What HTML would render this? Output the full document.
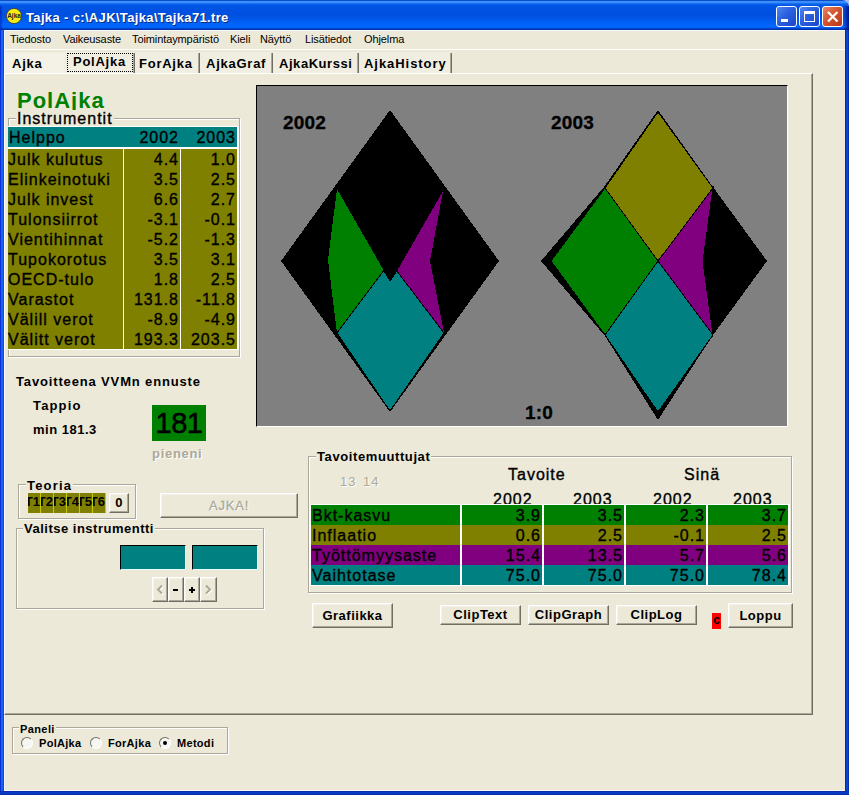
<!DOCTYPE html>
<html>
<head>
<meta charset="utf-8">
<title>Tajka</title>
<style>
html,body{margin:0;padding:0;}
body{width:849px;height:795px;overflow:hidden;background:#ece9d8;font-family:"Liberation Sans",sans-serif;position:relative;color:#000;}
.abs{position:absolute;}
div,span{box-sizing:border-box;}
#titlebar{position:absolute;left:0;top:0;width:849px;height:30px;
 background:linear-gradient(to bottom,#0a50c8 0px,#0a50c8 1px,#3c8eff 1.3px,#3a8cff 2.6px,#146ef0 3.6px,#0058e6 5px,#0052e2 9px,#0050e0 15px,#0058ea 19px,#0064fc 24px,#0066ff 27px,#0056e8 28px,#0038b4 29px,#002ea0 30px);}
#title{position:absolute;left:26px;top:10px;color:#fff;font-weight:bold;font-size:13px;letter-spacing:0.35px;text-shadow:1px 1px 0 #0a2a7a;white-space:nowrap;}
.bl{position:absolute;background:#0040d0;}
.wb{position:absolute;top:6px;width:21px;height:21px;border:1px solid #fff;border-radius:3px;
 background:linear-gradient(135deg,#4f86ee 0%,#2a5fe0 45%,#1a47c8 100%);}
#close{background:linear-gradient(135deg,#e8896b 0%,#d5532c 45%,#b8381a 100%);}
.menu{position:absolute;top:33px;font-size:11px;white-space:nowrap;letter-spacing:-0.1px}
.tab{position:absolute;top:56px;font-size:13px;font-weight:bold;white-space:nowrap;letter-spacing:0.75px;}
.t16{font-size:16px;letter-spacing:1px;white-space:nowrap;-webkit-text-stroke:0.35px #000;}
.row{position:absolute;left:8px;width:229px;height:20px;}
.c0{position:absolute;left:0px;top:2px;}
.c1{position:absolute;right:58px;top:2px;}
.c2{position:absolute;right:1px;top:2px;}
.b13{font-size:13px;font-weight:bold;white-space:nowrap;letter-spacing:0.3px;}
.btn{position:absolute;border:1px solid;border-color:#fff #716f64 #716f64 #fff;box-shadow:inset -1px -1px 0 #aca899, inset 1px 1px 0 #f4f2e8;background:#ece9d8;text-align:center;font-weight:bold;font-size:13px;letter-spacing:0.5px;}
.gb{position:absolute;border:1px solid #aca899;box-shadow:1px 1px 0 #fff, inset 1px 1px 0 #fff;}
.gbl{position:absolute;background:#ece9d8;white-space:nowrap;}

.tr{position:absolute;left:0;width:477px;height:20px;font-size:16px;letter-spacing:1px;white-space:nowrap;-webkit-text-stroke:0.35px #000;}
.tr .l{position:absolute;left:1px;top:2px;}
.tr .v{position:absolute;top:2px;}
.radio{position:absolute;width:12px;height:12px;border-radius:6px;background:#f6f6f2;border:1px solid;border-color:#716f64 #fff #fff #716f64;}
.rl{font-size:11px;font-weight:bold;white-space:nowrap;letter-spacing:0.3px}
.tb{position:absolute;top:0;width:12px;height:20px;background:#808000;overflow:hidden;font-size:13px;font-weight:bold;}
.tb span{position:absolute;right:0px;top:1px;white-space:nowrap;letter-spacing:0}
</style>
</head>
<body>
<!-- window frame -->
<div class="abs" style="left:841px;top:0;width:8px;height:8px;background:#a6baee"></div>
<div id="titlebar" style="border-radius:0 7px 0 0"></div>
<div class="bl" style="left:0;top:30px;width:4px;height:765px;background:linear-gradient(to right,#0a30d8 0px,#0a30d8 1px,#1a62f0 1px,#1a64f0 3px,#0a4cd8 3px,#0a4cd8 4px)"></div>
<div class="bl" style="left:845px;top:30px;width:4px;height:765px;background:linear-gradient(to right,#0a2c98 0px,#0a2c98 1px,#0a42c8 1px,#0a46d0 3px,#0830b4 3px,#0830b4 4px)"></div>
<div class="bl" style="left:0;top:791px;width:849px;height:4px;background:linear-gradient(to bottom,#0a2ea8 0px,#0a2ea8 1px,#0a3cc4 1px,#0a38c0 3px,#082cac 3px,#082cac 4px)"></div>
<div class="abs" style="left:4px;top:31px;width:1px;height:760px;background:#f4f6fc"></div>
<div class="abs" style="left:4px;top:790px;width:841px;height:1px;background:#f4f6fc"></div>

<div class="abs" style="left:843px;top:6px;width:6px;height:24px;background:linear-gradient(to right,rgba(0,10,140,0),rgba(0,10,130,0.55) 60%,rgba(0,0,110,0.75))"></div>
<div class="abs" style="left:0;top:6px;width:3px;height:24px;background:linear-gradient(to left,rgba(0,10,140,0),rgba(0,10,160,0.5))"></div>
<!-- title icon -->
<svg class="abs" style="left:6px;top:8px" width="16" height="16" viewBox="0 0 16 16"><circle cx="8" cy="8" r="7.6" fill="#f6ec12" stroke="#3a3a30" stroke-width="0.8"/><text x="8" y="10.3" font-family="Liberation Sans" font-size="6.5" font-weight="bold" text-anchor="middle" fill="#222">Ajka</text></svg>
<div id="title">Tajka - c:\AJK\Tajka\Tajka71.tre</div>
<div class="wb" style="left:776px"><div class="abs" style="left:4px;top:12px;width:7px;height:3px;background:#fff"></div></div>
<div class="wb" style="left:799px"><div class="abs" style="left:4px;top:4px;width:11px;height:11px;border:1px solid #fff;border-top-width:3px"></div></div>
<div class="wb" id="close" style="left:822px"><svg class="abs" style="left:0;top:0" width="19" height="19"><path d="M5 5 L14.5 14.5 M14.5 5 L5 14.5" stroke="#fff" stroke-width="2.2" stroke-linecap="butt"/></svg></div>

<!-- menu -->
<div class="menu" style="left:10px">Tiedosto</div>
<div class="menu" style="left:63px">Vaikeusaste</div>
<div class="menu" style="left:132px">Toimintaympäristö</div>
<div class="menu" style="left:230px">Kieli</div>
<div class="menu" style="left:260px">Näyttö</div>
<div class="menu" style="left:305px">Lisätiedot</div>
<div class="menu" style="left:364px">Ohjelma</div>
<div class="abs" style="left:4px;top:30px;width:841px;height:1px;background:#f8f8fc"></div>
<div class="abs" style="left:4px;top:49px;width:841px;height:1px;background:#fff"></div>

<!-- tabs -->
<div class="abs" style="left:5px;top:52px;width:446px;height:21px;background:#f0eee1"></div>
<div class="abs" style="left:5px;top:53px;width:59px;height:20px;background:#f4f2e6"></div>
<div class="tab" style="left:12px">Ajka</div>
<div class="abs" style="left:67px;top:53px;width:66px;height:19px;border:1px dotted #000"></div>
<div class="tab" style="left:73px;top:54px">PolAjka</div>
<div class="tab" style="left:139px">ForAjka</div>
<div class="tab" style="left:206px">AjkaGraf</div>
<div class="tab" style="left:279px;letter-spacing:0.55px">AjkaKurssi</div>
<div class="tab" style="left:364px;letter-spacing:0.95px">AjkaHistory</div>

<div class="abs" style="left:133px;top:53px;width:1px;height:20px;background:#aca899"></div><div class="abs" style="left:134px;top:53px;width:1px;height:20px;background:#716f64"></div><div class="abs" style="left:198px;top:53px;width:1px;height:20px;background:#aca899"></div><div class="abs" style="left:199px;top:53px;width:1px;height:20px;background:#716f64"></div><div class="abs" style="left:271px;top:53px;width:1px;height:20px;background:#aca899"></div><div class="abs" style="left:272px;top:53px;width:1px;height:20px;background:#716f64"></div><div class="abs" style="left:357px;top:53px;width:1px;height:20px;background:#aca899"></div><div class="abs" style="left:358px;top:53px;width:1px;height:20px;background:#716f64"></div><div class="abs" style="left:450px;top:53px;width:1px;height:20px;background:#aca899"></div><div class="abs" style="left:451px;top:53px;width:1px;height:20px;background:#716f64"></div>
<!-- main panel -->
<div class="abs" id="panel" style="left:4px;top:73px;width:809px;height:642px;border-top:1px solid #fff;border-left:1px solid #fff;border-right:1px solid #716f64;border-bottom:1px solid #716f64;box-shadow:inset -1px -1px 0 #aca899"></div>

<!-- PolAjka heading -->
<div class="abs" style="left:17px;top:88px;font-size:22px;font-weight:bold;color:#008000;letter-spacing:1px;white-space:nowrap">PolAjka</div>

<!-- Instrumentit groupbox -->
<div class="gb" style="left:8px;top:118px;width:232px;height:239px"></div>
<div class="gbl t16" style="left:16px;top:110px;padding:0 1px">Instrumentit</div>
<div class="abs" style="left:8px;top:126px;width:231px;height:224px;background:#fff"></div>
<div class="abs" style="left:8px;top:127px;width:229px;height:20px;background:#008080"></div>
<div class="abs" style="left:8px;top:149px;width:229px;height:200px;background:#808000"></div>
<div class="abs" style="left:123px;top:149px;width:1px;height:200px;background:#fff"></div>
<div class="abs" style="left:180px;top:149px;width:1px;height:200px;background:#fff"></div>
<div class="row t16" style="top:127px"><span class="c0" style="left:1px">Helppo</span><span class="c1">2002</span><span class="c2">2003</span></div>
<div class="row t16" style="top:149px"><span class="c0">Julk kulutus</span><span class="c1">4.4</span><span class="c2">1.0</span></div>
<div class="row t16" style="top:169px"><span class="c0">Elinkeinotuki</span><span class="c1">3.5</span><span class="c2">2.5</span></div>
<div class="row t16" style="top:189px"><span class="c0">Julk invest</span><span class="c1">6.6</span><span class="c2">2.7</span></div>
<div class="row t16" style="top:209px"><span class="c0">Tulonsiirrot</span><span class="c1">-3.1</span><span class="c2">-0.1</span></div>
<div class="row t16" style="top:229px"><span class="c0">Vientihinnat</span><span class="c1">-5.2</span><span class="c2">-1.3</span></div>
<div class="row t16" style="top:249px"><span class="c0">Tupokorotus</span><span class="c1">3.5</span><span class="c2">3.1</span></div>
<div class="row t16" style="top:269px"><span class="c0">OECD-tulo</span><span class="c1">1.8</span><span class="c2">2.5</span></div>
<div class="row t16" style="top:289px"><span class="c0">Varastot</span><span class="c1">131.8</span><span class="c2">-11.8</span></div>
<div class="row t16" style="top:309px"><span class="c0">Välill verot</span><span class="c1">-8.9</span><span class="c2">-4.9</span></div>
<div class="row t16" style="top:329px"><span class="c0">Välitt verot</span><span class="c1">193.3</span><span class="c2">203.5</span></div>

<!-- left middle -->
<div class="abs b13" style="left:16px;top:374px;letter-spacing:0.85px">Tavoitteena VVMn ennuste</div>
<div class="abs b13" style="left:33px;top:398px;letter-spacing:1.15px">Tappio</div>
<div class="abs b13" style="left:33px;top:422px;letter-spacing:0.5px">min 181.3</div>
<div class="abs" style="left:152px;top:405px;width:54px;height:36px;background:#008000;font-size:29px;text-align:center;line-height:36px;letter-spacing:-0.5px;-webkit-text-stroke:0.5px #000">181</div>
<div class="abs b13" style="left:152px;top:446px;letter-spacing:0.7px;color:#aca899;text-shadow:1px 1px 0 #fff">pieneni</div>

<!-- Teoria -->
<div class="gb" style="left:18px;top:484px;width:118px;height:35px"></div>
<div class="gbl b13" style="left:26px;top:478px;padding:0 1px;letter-spacing:1.2px">Teoria</div>
<div class="abs" id="teo" style="left:28px;top:493px;width:78px;height:20px;background:#c8c800"><div class="tb" style="left:0px"><span>T1</span></div><div class="tb" style="left:13px"><span>T2</span></div><div class="tb" style="left:26px"><span>T3</span></div><div class="tb" style="left:39px"><span>T4</span></div><div class="tb" style="left:52px"><span>T5</span></div><div class="tb" style="left:65px"><span>T6</span></div></div>
<div class="btn" style="left:109px;top:493px;width:20px;height:20px;line-height:18px">0</div>
<div class="btn" style="left:160px;top:493px;width:138px;height:25px;line-height:23px;color:#aca899;text-shadow:1px 1px 0 #fff;font-weight:normal;font-size:13px;letter-spacing:0.8px;-webkit-text-stroke:0.3px #aca899">AJKA!</div>

<!-- Valitse instrumentti -->
<div class="gb" style="left:16px;top:528px;width:248px;height:81px"></div>
<div class="gbl b13" style="left:23px;top:521px;padding:0 1px;letter-spacing:0.5px">Valitse instrumentti</div>
<div class="abs" style="left:120px;top:545px;width:66px;height:25px;background:#008080;border:1px solid;border-color:#000 #e8ffff #e8ffff #000"></div>
<div class="abs" style="left:192px;top:545px;width:66px;height:25px;background:#008080;border:1px solid;border-color:#000 #e8ffff #e8ffff #000"></div>
<div class="btn" style="left:152px;top:577px;width:16px;height:25px"><svg class="abs" style="left:0;top:0" width="14" height="23"><path d="M10 8.5 L6 12.5 L10 16.5" stroke="#fff" stroke-width="2" fill="none"/><path d="M9 7.5 L5 11.5 L9 15.5" stroke="#aca899" stroke-width="2" fill="none"/></svg></div>
<div class="btn" style="left:168px;top:577px;width:16px;height:25px"><div class="abs" style="left:4px;top:11px;width:5px;height:2px;background:#000"></div></div>
<div class="btn" style="left:184px;top:577px;width:16px;height:25px"><div class="abs" style="left:4px;top:11px;width:6px;height:2px;background:#000"></div><div class="abs" style="left:6px;top:9px;width:2px;height:6px;background:#000"></div></div>
<div class="btn" style="left:200px;top:577px;width:17px;height:25px"><svg class="abs" style="left:0;top:0" width="15" height="23"><path d="M6 8.5 L10 12.5 L6 16.5" stroke="#fff" stroke-width="2" fill="none"/><path d="M5 7.5 L9 11.5 L5 15.5" stroke="#aca899" stroke-width="2" fill="none"/></svg></div>

<!-- graph -->
<div class="abs" style="left:256px;top:85px;width:532px;height:342px;background:#808080;border-top:1px solid #000;border-left:1px solid #000;border-right:1px solid #fff;border-bottom:1px solid #fff"></div>
<svg class="abs" style="left:0;top:0" width="849" height="795" shape-rendering="crispEdges">
<polygon points="390,110 499,261 390,412 281,261" fill="#000"/>
<polygon points="337,189 328,260 337,333 384,271" fill="#008000"/>
<polygon points="443,191 430,261 444,333 397,271" fill="#800080"/>
<polygon points="390,262 444,333 390,411 337,333" fill="#008080" stroke="#000" stroke-width="1"/>
<polygon points="383,270 390,282 398,270 390,250" fill="#000"/>

<polygon points="658,110 713,187 767,261 713,335 658,420 605,336 541,261 604,187" fill="#000"/>
<polygon points="658,112 713,188 658,261 605,188" fill="#808000" stroke="#000" stroke-width="1"/>
<polygon points="605,188 658,261 605,335 551,261" fill="#008000" stroke="#000" stroke-width="1"/>
<polygon points="658,261 713,335 658,412 605,335" fill="#008080" stroke="#000" stroke-width="1"/>
<polygon points="658,261 713,188 703,261 713,335" fill="#800080" stroke="#000" stroke-width="1"/>
</svg>
<div class="abs" style="left:283px;top:112px;letter-spacing:0.2px;font-size:19px;-webkit-text-stroke:0.3px #000;font-weight:bold;white-space:nowrap">2002</div>
<div class="abs" style="left:551px;top:112px;letter-spacing:0.2px;font-size:19px;-webkit-text-stroke:0.3px #000;font-weight:bold;white-space:nowrap">2003</div>
<div class="abs" style="left:525px;top:402px;letter-spacing:0.2px;font-size:19px;-webkit-text-stroke:0.3px #000;font-weight:bold;white-space:nowrap">1:0</div>

<!-- Tavoitemuuttujat -->
<div class="gb" style="left:308px;top:456px;width:484px;height:137px"></div>
<div class="gbl b13" style="left:316px;top:449px;padding:0 1px;letter-spacing:0.6px">Tavoitemuuttujat</div>
<div class="abs b13" style="left:340px;top:474px;color:#aca899;text-shadow:1px 1px 0 #fff;font-weight:normal;word-spacing:2px;letter-spacing:1px">13 14</div>
<div class="abs t16" style="left:508px;top:466px">Tavoite</div>
<div class="abs t16" style="left:684px;top:466px">Sinä</div>
<div class="abs" style="left:311px;top:485px;width:477px;height:20px;overflow:hidden">
 <div class="abs t16" style="left:182px;top:6px">2002</div>
 <div class="abs t16" style="left:262px;top:6px">2003</div>
 <div class="abs t16" style="left:342px;top:6px">2002</div>
 <div class="abs t16" style="left:422px;top:6px">2003</div>
</div>
<div class="abs" style="left:310px;top:504px;width:480px;height:82px;background:#fff"></div>
<div class="abs" id="tt" style="left:311px;top:505px;width:477px;height:80px;background:#fff">
 <div class="tr" style="top:0;background:#008000"><span class="l">Bkt-kasvu</span><span class="v" style="right:247px">3.9</span><span class="v" style="right:165px">3.5</span><span class="v" style="right:83px">2.3</span><span class="v" style="right:1px">3.7</span></div>
 <div class="tr" style="top:20px;background:#808000"><span class="l">Inflaatio</span><span class="v" style="right:247px">0.6</span><span class="v" style="right:165px">2.5</span><span class="v" style="right:83px">-0.1</span><span class="v" style="right:1px">2.5</span></div>
 <div class="tr" style="top:40px;background:#800080"><span class="l">Työttömyysaste</span><span class="v" style="right:247px">15.4</span><span class="v" style="right:165px">13.5</span><span class="v" style="right:83px">5.7</span><span class="v" style="right:1px">5.6</span></div>
 <div class="tr" style="top:60px;background:#008080"><span class="l">Vaihtotase</span><span class="v" style="right:247px">75.0</span><span class="v" style="right:165px">75.0</span><span class="v" style="right:83px">75.0</span><span class="v" style="right:1px">78.4</span></div>
 <div class="abs" style="left:149px;top:0;width:2px;height:80px;background:#fff"></div>
 <div class="abs" style="left:231px;top:0;width:2px;height:80px;background:#fff"></div>
 <div class="abs" style="left:313px;top:0;width:2px;height:80px;background:#fff"></div>
 <div class="abs" style="left:395px;top:0;width:2px;height:80px;background:#fff"></div>
</div>

<!-- bottom buttons -->
<div class="btn" style="left:312px;top:603px;width:81px;height:25px;line-height:23px">Grafiikka</div>
<div class="btn" style="left:440px;top:605px;width:81px;height:20px;line-height:17px">ClipText</div>
<div class="btn" style="left:528px;top:605px;width:81px;height:20px;line-height:17px">ClipGraph</div>
<div class="btn" style="left:616px;top:605px;width:81px;height:20px;line-height:17px">ClipLog</div>
<div class="abs" style="left:712px;top:613px;width:9px;height:16px;background:#ff0000;font-size:12px;font-weight:bold;line-height:15px;text-align:center">c</div>
<div class="btn" style="left:728px;top:603px;width:65px;height:25px;line-height:23px">Loppu</div>

<!-- Paneli -->
<div class="gb" style="left:12px;top:727px;width:216px;height:27px"></div>
<div class="gbl" style="left:19px;top:723px;padding:0 1px;font-size:11px;font-weight:bold;letter-spacing:0.4px">Paneli</div>
<div class="radio" style="left:21px;top:737px"></div>
<div class="abs rl" style="left:39px;top:737px">PolAjka</div>
<div class="radio" style="left:90px;top:737px"></div>
<div class="abs rl" style="left:108px;top:737px">ForAjka</div>
<div class="radio" style="left:159px;top:737px"><div class="abs" style="left:3px;top:3px;width:4px;height:4px;background:#000;border-radius:2px"></div></div>
<div class="abs rl" style="left:177px;top:737px">Metodi</div>

</body>
</html>
